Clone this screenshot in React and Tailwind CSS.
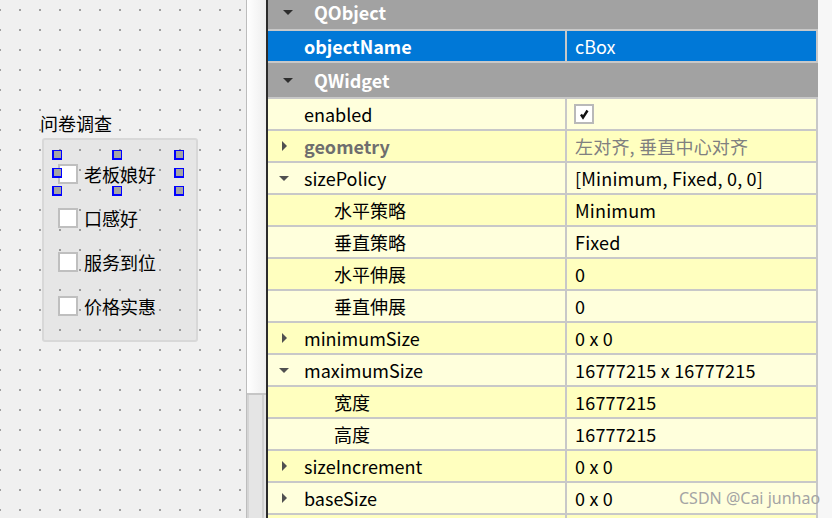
import { useState } from 'react';

const rows = [
  { kind: 'header', name: 'QObject' },
  { kind: 'selected', name: 'objectName', value: 'cBox' },
  { kind: 'header', name: 'QWidget' },
  { name: 'enabled', check: true, shade: 'light' },
  { name: 'geometry', value: '左对齐, 垂直中心对齐', arrow: 'right', muted: true, shade: 'dark' },
  { name: 'sizePolicy', value: '[Minimum, Fixed, 0, 0]', arrow: 'down', shade: 'light' },
  { name: '水平策略', value: 'Minimum', child: true, shade: 'dark' },
  { name: '垂直策略', value: 'Fixed', child: true, shade: 'light' },
  { name: '水平伸展', value: '0', child: true, shade: 'dark' },
  { name: '垂直伸展', value: '0', child: true, shade: 'light' },
  { name: 'minimumSize', value: '0 x 0', arrow: 'right', shade: 'dark' },
  { name: 'maximumSize', value: '16777215 x 16777215', arrow: 'down', shade: 'light' },
  { name: '宽度', value: '16777215', child: true, shade: 'dark' },
  { name: '高度', value: '16777215', child: true, shade: 'light' },
  { name: 'sizeIncrement', value: '0 x 0', arrow: 'right', shade: 'dark' },
  { name: 'baseSize', value: '0 x 0', arrow: 'right', shade: 'light' },
  { name: '', value: '', shade: 'dark' },
];

const options = ['老板娘好', '口感好', '服务到位', '价格实惠'];

const Arrow = ({ dir, color = '#505050' }) => (
  <svg width="12" height="12" viewBox="0 0 12 12" className="shrink-0">
    {dir === 'down' ? (
      <polygon points="1,4 11,4 6,9" fill={color} />
    ) : (
      <polygon points="4,1 9,6 4,11" fill={color} />
    )}
  </svg>
);

const Handle = ({ x, y }) => (
  <div
    className="absolute w-[10px] h-[10px] bg-[#a4a4a4] border border-[#0000ff] border-l-2 border-b-2"
    style={{ left: x, top: y }}
  />
);

const PropertyRow = ({ row }) => {
  if (row.kind === 'header') {
    return (
      <div className="flex items-center h-[36px] bg-[#a2a2a2] border-b-2 border-[#c8c8c8] shrink-0">
        <div className="w-[46px] pl-[14px] flex items-center">
          <Arrow dir="down" color="#2e2e2e" />
        </div>
        <span className="font-bold text-white">{row.name}</span>
      </div>
    );
  }

  if (row.kind === 'selected') {
    return (
      <div className="flex h-8 bg-[#0078d7] border-b-2 border-[#c8c8c8] shrink-0">
        <div className="w-[299px] pl-[36px] flex items-center border-r-2 border-[#c8c8c8] font-bold text-white">
          {row.name}
        </div>
        <div className="flex-1 pl-[8px] flex items-center text-white border-r-2 border-[#c8c8c8]">
          {row.value}
        </div>
      </div>
    );
  }

  const bg = row.shade === 'dark' ? 'bg-[#ffffbf]' : 'bg-[#ffffdc]';

  return (
    <div className={`flex h-8 ${bg} border-b-2 border-[#c8c8c8] shrink-0`}>
      <div className="w-[299px] flex items-center border-r-2 border-[#c8c8c8]">
        <div className={`${row.child ? 'w-[66px]' : 'w-[36px]'} pl-[10px] flex items-center`}>
          {row.arrow && <Arrow dir={row.arrow} />}
        </div>
        <span className={row.muted ? 'font-bold text-[#6e6e6e]' : 'text-black'}>{row.name}</span>
      </div>
      <div className="flex-1 pl-[8px] flex items-center border-r-2 border-[#c8c8c8]">
        {row.check ? (
          <div className="w-5 h-5 -ml-[1px] border-2 border-[#b9b9b9] bg-white flex items-center justify-center">
            <svg width="12" height="12" viewBox="0 0 12 12">
              <path d="M3 6.5 L5 9.5 L9.5 2.5" stroke="#111" strokeWidth="2.4" fill="none" />
            </svg>
          </div>
        ) : (
          <span className={`tracking-[0.2px] ${row.muted ? 'text-[#808080]' : 'text-black'}`}>{row.value}</span>
        )}
      </div>
    </div>
  );
};

export default function App() {
  const [checked] = useState([false, false, false, false]);

  return (
    <div className="w-[832px] h-[518px] overflow-hidden flex bg-[#f7f7f7] font-['Noto_Sans_CJK_SC','Noto_Sans',sans-serif] text-[18px] leading-none">
      {/* form canvas */}
      <div className="relative w-[246px] h-full bg-[#f0f0f0] shrink-0">
        <svg className="absolute inset-0" width="246" height="518">
          <defs>
            <pattern id="dots" width="20" height="20" patternUnits="userSpaceOnUse">
              <rect x="19" y="9" width="2" height="2" fill="#a0a0a0" />
              <rect x="-1" y="9" width="2" height="2" fill="#a0a0a0" />
            </pattern>
          </defs>
          <rect width="246" height="518" fill="url(#dots)" />
        </svg>

        <div className="absolute left-[40px] top-[112px] text-[18px] leading-[22px] text-black">问卷调查</div>

        <div className="absolute left-[42px] top-[138px] w-[156px] h-[204px] border-2 border-[#d8d8d8] rounded-[3px] bg-[#0000000a] flex flex-col gap-[24px] pt-[24px] pl-[14px]">
          {options.map((label, i) => (
            <div key={label} className="flex items-center gap-[6px] h-5">
              <div className={`w-5 h-5 border-2 border-[#bfbfbf] ${checked[i] ? 'bg-[#0078d7]' : 'bg-white'}`} />
              <span className="text-black">{label}</span>
            </div>
          ))}
        </div>

        <Handle x={52} y={150} />
        <Handle x={112} y={150} />
        <Handle x={174} y={150} />
        <Handle x={52} y={168} />
        <Handle x={174} y={168} />
        <Handle x={52} y={186} />
        <Handle x={112} y={186} />
        <Handle x={174} y={186} />
      </div>

      {/* scrollbar */}
      <div className="w-[20px] h-full flex flex-col border-l border-[#bdbdbd] shrink-0">
        <div className="h-[395px] bg-gradient-to-r from-white to-[#eeeeee] border-b-2 border-[#c6c6c6]" />
        <div className="flex-1 bg-[#e5e5e5] border-l-2 border-[#d4d4d4] flex justify-end pr-[2px]">
          <div className="w-[2px] h-full bg-[#d0d0d0]" />
        </div>
      </div>
      <div className="w-[2px] h-full bg-[#2b2b2b] shrink-0" />

      {/* property editor */}
      <div className="relative w-[550px] h-full shrink-0">
        <div className="flex flex-col -mt-[5px]">
          {rows.map((row, i) => (
            <PropertyRow key={i} row={row} />
          ))}
        </div>
        <div className="absolute left-[411px] top-[487px] whitespace-nowrap text-[16px] leading-[22px] text-[#a4a4a4] font-['Noto_Sans',sans-serif]">
          CSDN @Cai junhao
        </div>
      </div>
    </div>
  );
}
